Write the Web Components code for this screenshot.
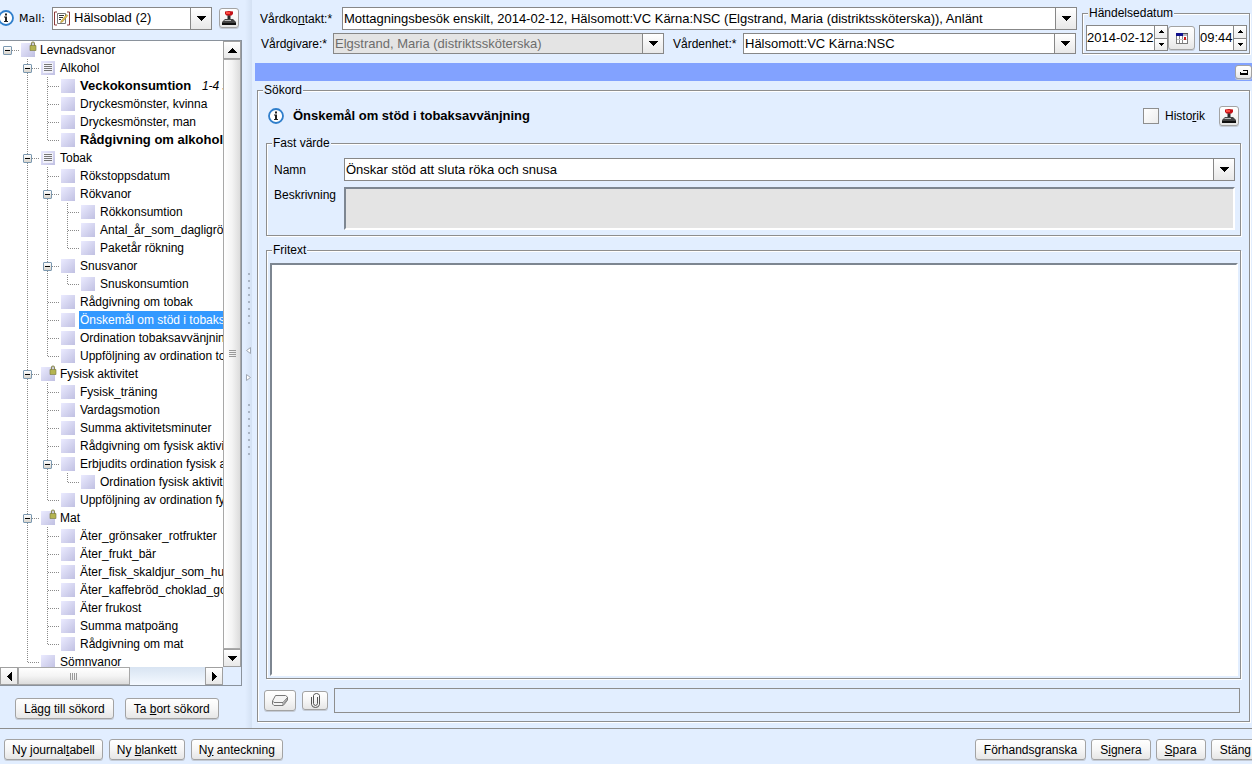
<!DOCTYPE html>
<html lang="sv">
<head>
<meta charset="utf-8">
<title>Hälsoblad – journalanteckning</title>
<style>
html, body { height: 100%; margin: 0; overflow: hidden; }
body { font: 12px/16px "Liberation Sans", Arial, sans-serif; color: #000; background: #e2eeff; }
</style>
</head>
<body>
<journal-app></journal-app>

<script>
const ARROWS = {
  down: '<path d="M0 0h9v1H8v1H7v1H6v1H5v1H4V4H3V3H2V2H1V1H0z"/>',
  up: '<path d="M4 0h1v1h1v1h1v1h1v1h1v1H0V4h1V3h1V2h1V1h1z"/>',
  left: '<path d="M5 0v9H4V8H3V7H2V6H1V5H0V4h1V3h1V2h1V1h1V0z"/>',
  right: '<path d="M0 0v9h1V8h1V7h1V6h1V5h1V4H4V3H3V2H2V1H1V0z"/>'
};
const arrow = (dir) => {
  const [w, h] = dir === 'down' || dir === 'up' ? [9, 5] : [5, 9];
  return `<svg width="${w}" height="${h}" viewBox="0 0 ${w} ${h}" aria-hidden="true">${ARROWS[dir]}</svg>`;
};

const ICONS = {
  info: `<svg width="17" height="17" viewBox="0 0 17 17"><circle cx="8" cy="8" r="7" fill="#fff" stroke="#2f7ecb" stroke-width="1.800"/><path d="M7 3.500h2v2H7zM6 6.500h3V11h1v1H6v-1h1V7.500H6z" fill="#222"/></svg>`,
  stamp: `<svg width="16" height="16" viewBox="0 0 16 16"><path d="M4 1.500Q8 .5 12 1.500V4Q11 6 8 6T4 4z" fill="#c41218"/><path d="M5 2h4v2H5z" fill="#ff4a40"/><path d="M6.500 5.500h3V10h-3z" fill="#2a2a2a"/><path d="M4 9h8l3 3v1H1v-1z" fill="#444"/><path d="M4 10h6v1H3z" fill="#bbb"/><path d="M1 13h14v2H1z" fill="#111"/></svg>`,
  calendar: `<svg width="12" height="11" viewBox="0 0 12 11" shape-rendering="crispEdges"><path d="M0 0h12v11H0z" fill="#7a7a7a"/><path d="M1 3h10v7H1z" fill="#fff"/><path d="M0 0h7v3H0z" fill="#10108c"/><path d="M7 0h5v1H7z" fill="#555"/><path d="M7 1h4v2H7z" fill="#b9b9c4"/><path d="M3 3h1v7H3zM6 3h1v7H6z" fill="#888"/><path d="M1 6h10v1H1z" fill="#c8c8c8"/><path d="M8 4h2v3H8z" fill="#d01818"/></svg>`,
  note: `<svg width="16" height="15" viewBox="0 0 16 15"><path d="M3 1H.500v13H3M13 1h2.500v13H13" fill="none" stroke="#8c3a3a"/><path d="M3.500 2.500h8v10h-8z" fill="#fff" stroke="#777"/><path d="M5 4.500h5M5 6.500h4M5 8.500h2" stroke="#333"/><path d="M7 10l5.500-6.500 1.500 1-5.500 6.500-2 .8z" fill="#e6c14a" stroke="#7a6a30" stroke-width=".4"/></svg>`,
  eraser: `<svg width="17" height="11" viewBox="0 0 17 11" fill="none" stroke="#777"><path d="M3.500.500h10l2 1.500v3l-3 4-1.500 1.500h-9L.500 9V6z" fill="#f4f4f4"/><path d="M.500 6L2 7.500h9l4.500-5M11 7.500v3"/><path d="M11.500 8l3.500-4.500v2L12 9.500z" fill="#999" stroke="none"/></svg>`,
  clip: `<svg width="9" height="15" viewBox="0 0 9 15" fill="none" stroke="#555"><path d="M.500 4v7.500Q1 14.500 4.500 14.500T8.500 11.500V2.500Q8 .500 5.500.500T2.500 2.500v8Q3 12.500 4.500 12.500T6.500 10.500V4"/></svg>`,
  collapse: `<svg width="8" height="6" viewBox="0 0 8 6" shape-rendering="crispEdges"><path d="M0 4h8v2H0zM7 1h1v3H7zM3 1h4v1H3zM0 3h1v1H0z"/></svg>`
};

const define = (name, html, setup) => {
  const template = document.createElement('template');
  customElements.define(name, class extends HTMLElement {
    connectedCallback() {
      if (this.shadowRoot) return;
      template.innerHTML = typeof html === 'function' ? html(this) : html;
      this.attachShadow({ mode: 'open' }).append(template.content.cloneNode(true));
      if (setup) setup(this, this.shadowRoot);
    }
  });
};

/* Small picture by name */
define('ui-icon', (el) => `
<style>:host { display: inline-flex; flex: none; } svg { display: block; }</style>
${ICONS[el.getAttribute('name')]}`);

/* Push button with text or an icon */
define('ui-button', (el) => `
<style>
:host { display: inline-flex; flex: none; width: var(--w, auto); height: var(--h, 21px); }
button { flex: 1; display: flex; align-items: center; justify-content: center; padding: 0 var(--side, 8px);
  font: inherit; color: inherit; white-space: nowrap; border: 1px solid #a3a3a3; border-radius: 3px;
  background: linear-gradient(#fff, #f6f6f6 50%, #e6e6e6); box-shadow: 0 1px 0 #c4cbd6; }
.face { display: block; }
::slotted(ui-icon) { display: flex; }
</style>
<button type="button" ${el.title ? `aria-label="${el.title}"` : ''}><span class="face"><slot></slot></span></button>`);

/* Labelled drop-down */
define('ui-select', (el) => `
<style>
:host { display: flex; align-items: center; min-width: 0; }
label { flex: none; width: var(--label-w, auto); white-space: nowrap; }
.box { flex: 1; min-width: 0; display: flex; align-items: center; position: relative; height: var(--h, 23px); box-sizing: border-box;
  border: 1px solid #878787; background: var(--bg, #fff); }
select { flex: 1; align-self: stretch; min-width: 0; appearance: none; border: 0; border-radius: 0; margin: 0; padding: 0 22px 0 1px;
  background: none; font: 13px/16px "Liberation Sans", Arial, sans-serif; color: var(--ink, #000); opacity: 1; }
.arrow { position: absolute; top: 0; right: 0; bottom: 0; width: 20px; display: flex; align-items: center; justify-content: center;
  border-left: 1px solid #878787; background: linear-gradient(#fff, #e8e8e8); pointer-events: none; }
::slotted([slot=icon]) { margin: 0 3px 0 1px; }
</style>
<label for="s"><slot></slot></label>
<div class="box"><slot name="icon"></slot>
<select id="s" ${el.hasAttribute('disabled') ? 'disabled' : ''}><option>${el.getAttribute('value')}</option></select>
<span class="arrow">${arrow('down')}</span></div>`);

/* Text box with step buttons */
define('ui-spinner', (el) => `
<style>
:host { display: flex; flex: none; width: var(--w); height: 26px; box-sizing: border-box; border: 1px solid #878787; background: #fff; }
input { flex: 1; min-width: 0; border: 0; padding: 0; background: none; font: 13px/16px "Liberation Sans", Arial, sans-serif; }
.steps { width: 12px; display: flex; flex-direction: column; border-left: 1px solid #878787; }
button { flex: 1; border: 0; padding: 0; display: flex; align-items: center; justify-content: center; background: linear-gradient(#fff, #ececec); }
button + button { border-top: 1px solid #878787; }
</style>
<input type="text" aria-label="${el.getAttribute('label')}" value="${el.getAttribute('value')}">
<div class="steps">
<button type="button" aria-label="Öka"><svg width="5" height="3" viewBox="0 0 5 3"><path d="M2 0h1v1h1v1h1v1H0V2h1V1h1z"/></svg></button>
<button type="button" aria-label="Minska"><svg width="5" height="3" viewBox="0 0 5 3"><path d="M0 0h5v1H4v1H3v1H2V2H1V1H0z"/></svg></button>
</div>`);

/* Etched frame with a caption */
define('ui-group', (el) => `
<style>
:host { display: flex; min-width: 0; min-height: 0; }
fieldset { flex: 1; display: flex; flex-direction: column; min-width: 0; min-height: 0; margin: 0; padding: 0;
  border: 1px solid #8e8e8e; box-shadow: 1px 1px 0 #fff, inset 1px 1px 0 #fff; }
legend { margin-left: 5px; padding: 0 1px; height: 12px; line-height: 12px; background: #e2eeff; }
.body { flex: 1; display: flex; flex-direction: column; min-width: 0; min-height: 0; padding: var(--inset, 0); }
</style>
<fieldset><legend>${el.getAttribute('caption')}</legend><div class="body"><slot></slot></div></fieldset>`);

/* Scroll bar, vertical or horizontal */
define('scroll-bar', (el) => {
  const h = el.hasAttribute('horizontal');
  return `
<style>
:host { display: flex; flex-direction: ${h ? 'row' : 'column'}; background: linear-gradient(${h ? '180deg' : '90deg'}, #d8e4f2, #f4f9ff); }
button { flex: none; width: 18px; height: 18px; box-sizing: border-box; border: 1px solid #a0a0a0; padding: 0; display: flex; align-items: center; justify-content: center;
  background: linear-gradient(#fff, #e8e8e8); }
.track { flex: 1; display: flex; flex-direction: inherit; }
.thumb { flex: 0 1 var(--thumb, 100%); display: flex; align-items: center; justify-content: center; box-sizing: border-box;
  border: 1px solid #a8a8a8; background: linear-gradient(${h ? '180deg' : '90deg'}, #fff, #f4f4f4 50%, #dcdcdc); }
.grip { ${h ? 'width: 8px; height: 7px' : 'width: 7px; height: 8px'}; background: repeating-linear-gradient(${h ? '90deg' : '180deg'}, #999 0 1px, transparent 1px 2px); }
</style>
<button type="button" tabindex="-1" aria-label="Rulla bakåt">${arrow(h ? 'left' : 'up')}</button>
<div class="track"><div class="thumb"><div class="grip"></div></div></div>
<button type="button" tabindex="-1" aria-label="Rulla framåt">${arrow(h ? 'right' : 'down')}</button>`;
});

/* Tree node; child nodes are slotted below its row */
define('tree-node', (el) => {
  const kind = el.getAttribute('kind');
  const id = Math.random().toString(36).slice(2);
  return `
<style>
:host { display: block; --dots: repeating-linear-gradient(#8a8a8a 0 1px, transparent 1px 2px); }
:host([sub]) { background: var(--dots) 7px 0 / 1px 100% no-repeat; }
:host([sub]:last-child) { background-size: 1px 9px; }
.row { display: flex; align-items: center; height: 18px; }
.guide { flex: none; width: 21px; height: 18px; display: flex; align-items: center; box-sizing: border-box; padding-left: 3px;
  background: repeating-linear-gradient(90deg, #8a8a8a 0 1px, transparent 1px 2px) 8px 9px / 11px 1px no-repeat; }
.guide button { width: 9px; height: 9px; box-sizing: border-box; padding: 0; border: 1px solid #7b98b0; border-radius: 1px;
  background: linear-gradient(#000, #000) center / 5px 1px no-repeat, linear-gradient(#fff, #d8d4cc); }
svg { flex: none; display: block; }
.label { white-space: nowrap; line-height: 18px; padding: 0 1px; margin-left: 2px; font-size: 12px; }
:host([strong]) > .row .label, :host([strong]) .label { font-size: 13px; font-weight: bold; }
:host([selected]) .label { background: #3399ff; color: #fff; }
i { font-size: 12px; font-weight: normal; margin-left: 7px; }
.kids { padding-left: 20px; }
</style>
<div class="row" role="treeitem">
<span class="guide">${el.children.length ? '<button type="button" aria-label="Fäll ihop"></button>' : ''}</span>
<svg width="16" height="18" viewBox="0 0 16 18" aria-hidden="true">
<defs><linearGradient id="g${id}" x1="0" y1="0" x2="1" y2="1"><stop offset="0" stop-color="#ebebff"/><stop offset="1" stop-color="#c0c0e2"/></linearGradient></defs>
<rect x="0" y="2" width="14" height="14" fill="url(#g${id})"/>
${kind === 'list' ? '<path d="M2 4h10v10H2z" fill="#fff" fill-opacity=".7"/><path d="M3 5.500h8M3 7.500h8M3 9.500h8M3 11.500h8" stroke="#777"/>' : ''}
${kind === 'lock' ? '<path d="M10.500 5V3.500q0-2.500 1.500-2.500t1.500 2.500V5" fill="none" stroke="#8a8a55" stroke-width="1.200"/><path d="M9 4.500h6v5H9z" fill="#b4b450" stroke="#77773a" stroke-width=".6"/>' : ''}
</svg>
<span class="label">${el.getAttribute('label')}${el.hasAttribute('note') ? ` <i>${el.getAttribute('note')}</i>` : ''}</span>
</div>
<div class="kids" role="group"><slot></slot></div>`;
});

const TREE = ['Levnadsvanor', { kind: 'lock' }, [
  ['Alkohol', { kind: 'list' }, [
    ['Veckokonsumtion', { strong: '', note: '1-4 standardglas' }],
    ['Dryckesmönster, kvinna'],
    ['Dryckesmönster, man'],
    ['Rådgivning om alkohol', { strong: '' }]]],
  ['Tobak', { kind: 'list' }, [
    ['Rökstoppsdatum'],
    ['Rökvanor', {}, [['Rökkonsumtion'], ['Antal_år_som_dagligrökare'], ['Paketår rökning']]],
    ['Snusvanor', {}, [['Snuskonsumtion']]],
    ['Rådgivning om tobak'],
    ['Önskemål om stöd i tobaksavvänjning', { selected: '' }],
    ['Ordination tobaksavvänjning'],
    ['Uppföljning av ordination tobak']]],
  ['Fysisk aktivitet', { kind: 'lock' }, [
    ['Fysisk_träning'],
    ['Vardagsmotion'],
    ['Summa aktivitetsminuter'],
    ['Rådgivning om fysisk aktivitet'],
    ['Erbjudits ordination fysisk aktivitet', {}, [['Ordination fysisk aktivitet']]],
    ['Uppföljning av ordination fysisk aktivitet']]],
  ['Mat', { kind: 'lock' }, [
    ['Äter_grönsaker_rotfrukter'],
    ['Äter_frukt_bär'],
    ['Äter_fisk_skaldjur_som_huvudrätt'],
    ['Äter_kaffebröd_choklad_godis'],
    ['Äter frukost'],
    ['Summa matpoäng'],
    ['Rådgivning om mat']]],
  ['Sömnvanor']]];

const buildNode = ([label, attrs = {}, kids = []], sub) => {
  const node = document.createElement('tree-node');
  node.setAttribute('label', label);
  if (sub) node.setAttribute('sub', '');
  for (const key in attrs) node.setAttribute(key, attrs[key]);
  node.append(...kids.map((kid) => buildNode(kid, true)));
  return node;
};

/* Left side: template picker, tree and its two buttons */
define('keyword-panel', `
<style>
:host { display: flex; flex-direction: column; min-height: 0; }
.top { display: flex; align-items: center; height: 40px; box-sizing: border-box; padding: 0 3px 4px 0; }
.top ui-icon[name=info] { margin-left: -2px; }
ui-select { flex: 1; --label-w: 33px; margin: 0 7px 0 4px; }
.mall { font: 11px/16px "DejaVu Sans", Verdana, sans-serif; }
.frame { flex: 1; min-height: 0; display: grid; grid-template: minmax(0, 1fr) 18px / minmax(0, 1fr) 18px;
  border: 1px solid #8a929c; border-left: 0; }
.tree { background: #fff; overflow: hidden; }
.actions { display: flex; gap: 11px; padding: 12px 15px 9px; }
</style>
<div class="top">
<ui-icon name="info"></ui-icon>
<ui-select value="Hälsoblad (2)"><span class="mall">Mall:</span><ui-icon slot="icon" name="note"></ui-icon></ui-select>
<ui-button title="Stämpla" style="--w:20px;--h:20px;--side:0px"><ui-icon name="stamp"></ui-icon></ui-button>
</div>
<div class="frame">
<div class="tree" role="tree"></div>
<scroll-bar></scroll-bar>
<scroll-bar horizontal style="--thumb:112px"></scroll-bar>
</div>
<div class="actions"><ui-button>Lägg till sökord</ui-button><ui-button>Ta <u>b</u>ort sökord</ui-button></div>`,
(el, root) => root.querySelector('.tree').append(buildNode(TREE, false)));

/* Divider between the two sides */
define('split-bar', `
<style>
:host { display: flex; flex-direction: column; align-items: center; justify-content: center; gap: 20px; padding-left: 3px;
  background: linear-gradient(90deg, #e2eeff 3px, #d4e1f3); }
.dots { width: 2px; height: 51px; background: repeating-linear-gradient(#a9b4c4 0 2px, transparent 2px 7px); }
.dots:first-of-type { margin-bottom: 3px; }
.dots:last-of-type { margin-top: 3px; }
svg { display: block; }
</style>
<div class="dots"></div>
<svg width="5" height="7" viewBox="0 0 5 7" fill="#fff" stroke="#a0a8b4"><path d="M4.500.500v6l-4-3z"/></svg>
<svg width="5" height="7" viewBox="0 0 5 7" fill="#fff" stroke="#a0a8b4"><path d="M.500.500v6l4-3z"/></svg>
<div class="dots"></div>`);

/* Contact, care giver, unit and time of the event */
define('contact-bar', `
<style>
:host { display: flex; gap: 5px; padding: 7px 2px 9px 8px; }
.fields { flex: 1; min-width: 0; display: flex; flex-direction: column; gap: 3px; }
.pair { display: flex; gap: 9px; padding: 0 1px; }
.pair ui-select { flex: 1 1 0; --h: 21px; }
.when { display: flex; align-items: center; padding: 6px 0 0 3px; }
ui-group { flex: none; width: 168px; }
</style>
<div class="fields">
<ui-select style="--label-w:82px" value="Mottagningsbesök enskilt, 2014-02-12, Hälsomott:VC Kärna:NSC (Elgstrand, Maria (distriktssköterska)), Anlänt">Vårdko<u>n</u>takt:*</ui-select>
<div class="pair">
<ui-select disabled style="--label-w:72px;--bg:#e4e4e4;--ink:#6d6d6d" value="Elgstrand, Maria (distriktssköterska)">Vårdgivare:*</ui-select>
<ui-select style="--label-w:70px" value="Hälsomott:VC Kärna:NSC">Vårdenhet:*</ui-select>
</div>
</div>
<ui-group caption="Händelsedatum">
<div class="when">
<ui-spinner style="--w:82px" label="Datum" value="2014-02-12"></ui-spinner>
<ui-button title="Kalender" style="--w:27px;--h:24px;--side:0px;margin-right:4px"><ui-icon name="calendar"></ui-icon></ui-button>
<ui-spinner style="--w:48px" label="Tid" value="09:44"></ui-spinner>
</div>
</ui-group>`);

/* Form for the chosen keyword */
define('keyword-form', `
<style>
:host { display: flex; min-height: 0; }
.outer { flex: 1; --inset: 9px 8px 8px; }
.head { flex: none; display: flex; align-items: center; height: 22px; padding: 0 2px; }
h1 { flex: 1; margin: 0 0 0 8px; font-size: 13px; line-height: 16px; }
.head label { display: flex; align-items: center; gap: 6px; margin-right: 14px; }
input[type=checkbox] { appearance: none; width: 16px; height: 16px; margin: 0; border: 1px solid #8e8e8e; background: linear-gradient(135deg, #fff, #ececec); }
.fixed { flex: none; margin-top: 10px; --inset: 9px 5px 5px 7px; }
.grid { display: grid; grid-template-columns: 70px minmax(0, 1fr); row-gap: 6px; }
.grid ui-select { grid-column: 1 / -1; --label-w: 70px; }
textarea { display: block; box-sizing: border-box; width: 100%; margin: 0; resize: none; border: 2px solid; border-color: #7d8691 #fff #fff #7d8691; background: #fff; font: 13px/16px "Liberation Sans", Arial, sans-serif; }
.grid textarea { height: 43px; background: #e4e4e4; }
.free { flex: 1; margin-top: 8px; --inset: 7px 2px 2px 3px; }
.free textarea { flex: 1; }
.attach { display: flex; align-items: center; gap: 6px; margin: 9px 1px 0 -2px; }
.attach output { flex: 1; height: 23px; border: 1px solid #8e8e8e; }
</style>
<ui-group class="outer" caption="Sökord">
<div class="head">
<ui-icon name="info"></ui-icon>
<h1>Önskemål om stöd i tobaksavvänjning</h1>
<label><input type="checkbox"><span>Histo<u>r</u>ik</span></label>
<ui-button title="Stämpla" style="--w:20px;--h:20px;--side:0px"><ui-icon name="stamp"></ui-icon></ui-button>
</div>
<ui-group class="fixed" caption="Fast värde">
<div class="grid">
<ui-select value="Önskar stöd att sluta röka och snusa">Namn</ui-select>
<label for="desc">Beskrivning</label><textarea id="desc" readonly></textarea>
</div>
</ui-group>
<ui-group class="free" caption="Fritext"><textarea aria-label="Fritext"></textarea></ui-group>
<div class="attach">
<ui-button title="Radera" style="--w:32px;--side:0px"><ui-icon name="eraser"></ui-icon></ui-button>
<ui-button title="Bifoga" style="--w:26px;--h:19px;--side:0px"><ui-icon name="clip"></ui-icon></ui-button>
<output></output>
</div>
</ui-group>`);

define('journal-app', `
<style>
:host { display: grid; height: 100vh; overflow: hidden; grid-template: minmax(0, 1fr) 36px / 242px 10px minmax(0, 1fr); }
main { display: flex; flex-direction: column; min-width: 0; min-height: 0; padding-bottom: 6px; }
.bar { flex: none; height: 18px; display: flex; align-items: center; justify-content: flex-end; margin-left: 3px; background: #82a2ff; }
keyword-form { flex: 1; margin: 3px 2px 0 5px; }
footer { grid-column: 1 / -1; display: flex; justify-content: space-between; align-items: center; border-top: 1px solid #8e8e8e; padding: 6px 4px 0; margin-right: -12px; height: 29px; }
nav { display: flex; gap: 5px; }
.new { --side: 7px; gap: 6px; }
</style>
<keyword-panel></keyword-panel>
<split-bar></split-bar>
<main>
<contact-bar></contact-bar>
<div class="bar"><ui-button title="Minimera" style="--w:17px;--h:14px;--side:0px"><ui-icon name="collapse"></ui-icon></ui-button></div>
<keyword-form></keyword-form>
</main>
<footer>
<nav class="new"><ui-button>Ny journal<u>t</u>abell</ui-button><ui-button>Ny <u>b</u>lankett</ui-button><ui-button>N<u>y</u> anteckning</ui-button></nav>
<nav><ui-button>Förhandsgranska</ui-button><ui-button>S<u>i</u>gnera</ui-button><ui-button><u>S</u>para</ui-button><ui-button>Stän<u>g</u></ui-button></nav>
</footer>`);
</script>
</body>
</html>
